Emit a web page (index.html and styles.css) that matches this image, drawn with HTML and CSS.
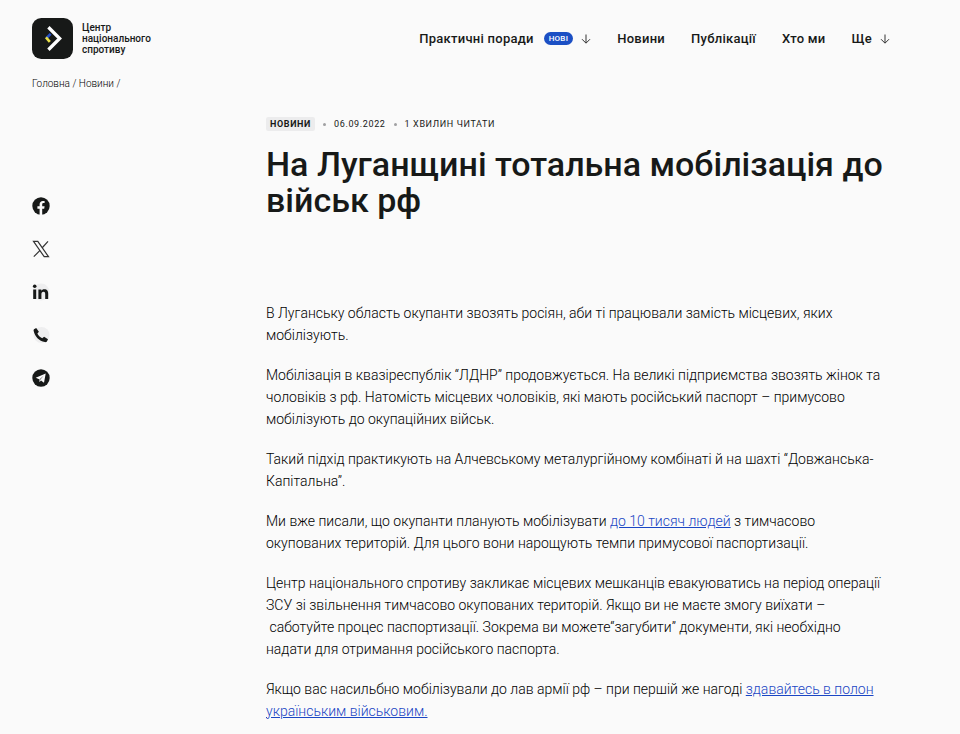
FILE: index.html
```
<!DOCTYPE html>
<html lang="uk">
<head>
    <meta charset="UTF-8">
    <meta name="viewport" content="width=device-width, initial-scale=1.0">
    <title>На Луганщині тотальна мобілізація до військ рф</title>
    <link rel="stylesheet" href="styles.css">
</head>
<body>
    <header class="header">
        <a class="logo" href="#">
            <svg class="logo-mark" viewBox="0 0 40 40" aria-hidden="true">
                <rect width="40" height="40" rx="9" fill="#171918"/>
                <path d="M16 9 27 20 16 31" fill="none" stroke="#fff" stroke-width="3.200"/>
                <path d="M18.200 15.500 14 19.700" stroke="#2450c8" stroke-width="2.600"/>
                <path d="M13.600 19 17.400 23.200" stroke="#e9e04a" stroke-width="2.600"/>
            </svg>
            <span class="logo-text">Центр<br>національного<br>спротиву</span>
        </a>
        <nav class="menu">
            <a href="#">Практичні поради
                <span class="badge">НОВІ</span>
                <svg class="arrow" viewBox="0 0 10 10" aria-hidden="true"><path d="M5 0.500V9M1 5.200 5 9.200 9 5.200"/></svg>
            </a>
            <a href="#">Новини</a>
            <a href="#">Публікації</a>
            <a href="#">Хто ми</a>
            <a href="#">Ще
                <svg class="arrow" viewBox="0 0 10 10" aria-hidden="true"><path d="M5 0.500V9M1 5.200 5 9.200 9 5.200"/></svg>
            </a>
        </nav>
    </header>

    <nav class="breadcrumbs"><a href="#">Головна</a> / <a href="#">Новини</a> /</nav>

    <main class="page">
        <aside class="share">
            <a href="#" aria-label="Facebook">
                <svg viewBox="0 0 18 18"><circle cx="9" cy="9" r="8.700" fill="#171918"/><path d="M7.600 18v-6.300H5.400V9.200h2.200V7.400c0-2.300 1.300-3.500 3.300-3.500.9 0 1.700.1 1.700.1v2h-1c-1.100 0-1.400.7-1.400 1.300v1.900h2.400l-.4 2.500h-2V18z" fill="#fafafa"/></svg>
            </a>
            <a href="#" aria-label="X">
                <svg viewBox="0 0 18 18"><path d="M1.500 1.300h4.300l10.700 15.400h-4.300zM16 1.300 10 8M8 10.300 1.800 16.700" fill="none" stroke="#333" stroke-width="1.200"/></svg>
            </a>
            <a href="#" aria-label="LinkedIn">
                <svg viewBox="0 0 18 18"><circle cx="9" cy="9" r="8.500" fill="#eeeeef"/><g fill="#171918"><circle cx="2.700" cy="3.300" r="1.800"/><path d="M1.200 6.500h3V16h-3zM6.400 6.500h2.900v1.300c.5-.9 1.500-1.500 3-1.500 3 0 3.900 1.800 3.900 4.500V16h-3v-4.700c0-1.300-.2-2.500-1.700-2.500s-2.100 1.100-2.100 2.500V16h-3z"/></g></svg>
            </a>
            <a href="#" aria-label="Телефон">
                <svg viewBox="0 0 18 18"><circle cx="9.500" cy="9" r="8" fill="#eeeeef"/><path d="M2 3.200 4.200 2l2.700 3.800-1.500 1.800c.9 2.100 2.500 3.700 4.800 4.700l1.900-1.600 3.900 2.600-1.100 2.300c-.5.500-1.200.7-2 .5C7.100 15.100 2.700 10.600 1.600 4.800c-.1-.6 0-1.200.4-1.600z" fill="#171918"/></svg>
            </a>
            <a href="#" aria-label="Telegram">
                <svg viewBox="0 0 18 18"><circle cx="9" cy="9" r="8.700" fill="#171918"/><path d="M3.700 8.800 13.700 4.600 12 13.700 9 11.500l-1.500 1.400-.4-2.700z" fill="#fafafa"/><path d="m7.200 10.400 4.600-3.800-3.600 4.300-.6 1.700z" fill="#777"/></svg>
            </a>
        </aside>

        <article class="article">
            <div class="meta">
                <a class="tag" href="#">Новини</a>
                <span class="dot"></span>
                <time datetime="2022-09-06">06.09.2022</time>
                <span class="dot"></span>
                <span>1 хвилин читати</span>
            </div>
            <h1>На Луганщині тотальна мобілізація до військ рф</h1>
            <div class="content">
                <p>В Луганську область окупанти звозять росіян, аби ті працювали замість місцевих, яких мобілізують.</p>
                <p>Мобілізація в квазіреспублік “ЛДНР” продовжується. На великі підприємства звозять жінок та чоловіків з рф. Натомість місцевих чоловіків, які мають російський паспорт – примусово мобілізують до окупаційних військ.</p>
                <p>Такий підхід практикують на Алчевському металургійному комбінаті й на шахті “Довжанська-Капітальна”.</p>
                <p>Ми вже писали, що окупанти планують мобілізувати <a href="#">до 10 тисяч людей</a> з тимчасово окупованих територій. Для цього вони нарощують темпи примусової паспортизації.</p>
                <p>Центр національного спротиву закликає місцевих мешканців евакуюватись на період операції ЗСУ зі звільнення тимчасово окупованих територій. Якщо ви не маєте змогу виїхати – &nbsp;саботуйте процес паспортизації. Зокрема ви можете“загубити” документи, які необхідно надати для отримання російського паспорта.</p>
                <p>Якщо вас насильбно мобілізували до лав армії рф – при першій же нагоді <a href="#">здавайтесь в полон українським військовим.</a></p>
            </div>
        </article>
    </main>
</body>
</html>
```
FILE: styles.css
```
body {
    margin: 0;
    font-family: Roboto, "Liberation Sans", sans-serif;
    color: #171918;
    background-color: #fafafa;
}
a {
    color: inherit;
    text-decoration: none;
}
.header {
    display: flex;
    align-items: center;
    justify-content: space-between;
    padding: 18px 70px 0 32px;
}
.logo {
    display: flex;
    align-items: center;
    gap: 9px;
}
.logo-mark {
    width: 41px;
    height: 41px;
}
.logo-text {
    font-size: 10px;
    font-weight: 500;
    line-height: 11px;
}
.menu {
    display: flex;
    gap: 26px;
    font-size: 13px;
    font-weight: 500;
    line-height: 16px;
    letter-spacing: 0.02em;
}
.menu a {
    display: flex;
    align-items: center;
    gap: 8px;
}
.badge {
    margin-left: 2px;
    padding: 0 5px;
    border-radius: 7px;
    font-size: 8px;
    line-height: 13px;
    color: white;
    background-color: #1b4fc4;
}
.arrow {
    width: 10px;
    height: 10px;
    fill: none;
    stroke: #333;
}
.breadcrumbs {
    margin-top: 18px;
    padding: 0 32px;
    font-size: 10px;
    font-weight: 300;
    line-height: 14px;
    color: black;
}
.page {
    display: grid;
    grid-template-columns: 202px 1fr;
    gap: 32px;
    padding: 26px 74px 14px 32px;
}
.share {
    display: flex;
    flex-direction: column;
    gap: 25px;
    padding-top: 80px;
}
.share svg {
    display: block;
    width: 18px;
    height: 18px;
}
.meta {
    display: flex;
    align-items: center;
    gap: 8px;
    font-size: 9px;
    line-height: 14px;
    letter-spacing: 0.07em;
    text-transform: uppercase;
}
.tag {
    padding: 0 4px;
    border-radius: 2px;
    font-weight: 700;
    background-color: #ececed;
}
.dot {
    width: 3px;
    height: 3px;
    border-radius: 50%;
    background-color: #a0a0a2;
}
h1 {
    margin: 15px 0 0;
    font-size: 34px;
    font-weight: 500;
    line-height: 36px;
}
.content {
    margin-top: 84px;
    font-size: 14px;
    font-weight: 300;
    line-height: 22px;
    color: black;
}
.content p {
    margin: 0 0 18px;
}
.content a {
    color: #1a46c4;
    text-decoration: underline;
}
```
